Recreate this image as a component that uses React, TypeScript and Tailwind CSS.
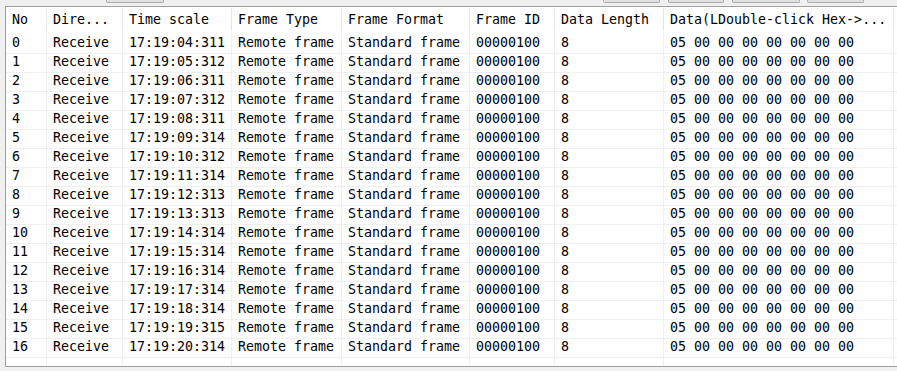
const times = [
  '17:19:04:311',
  '17:19:05:312',
  '17:19:06:311',
  '17:19:07:312',
  '17:19:08:311',
  '17:19:09:314',
  '17:19:10:312',
  '17:19:11:314',
  '17:19:12:313',
  '17:19:13:313',
  '17:19:14:314',
  '17:19:15:314',
  '17:19:16:314',
  '17:19:17:314',
  '17:19:18:314',
  '17:19:19:315',
  '17:19:20:314',
];

const headers = [
  'No',
  'Dire...',
  'Time scale',
  'Frame Type',
  'Frame Format',
  'Frame ID',
  'Data Length',
  'Data(LDouble-click Hex->...',
  '',
];

const cols = 'grid grid-cols-[41px_76px_109px_110px_128px_85px_109px_230px_200px]';

export default function App() {
  return (
    <div className="h-[371px] w-[897px] overflow-hidden bg-[#f0f0f0] font-['DejaVu_Sans_Mono',monospace] text-[13.3px] text-black">
      {/* toolbar buttons, only the bottom edge shows */}
      <div className="flex h-[3px]">
        <div className="ml-[106px] w-[58px] rounded-b-[2px] border-x border-b border-[#adadad] bg-[#e1e1e1]" />
        <div className="ml-[439px] w-[57px] rounded-b-[2px] border-x border-b border-[#adadad] bg-[#e1e1e1]" />
        <div className="ml-[8px] w-[56px] rounded-b-[2px] border-x border-b border-[#adadad] bg-[#e1e1e1]" />
        <div className="ml-[8px] w-[68px] rounded-b-[2px] border-x border-b border-[#adadad] bg-[#e1e1e1]" />
        <div className="ml-[7px] w-[57px] rounded-b-[2px] border-x border-b border-[#adadad] bg-[#e1e1e1]" />
      </div>

      {/* table frame */}
      <div className="ml-[5px] mt-[3px] h-[361px] w-[1100px] overflow-hidden border-y border-l border-[#a0a0a0] bg-white">
        <div className={`${cols} h-[24px]`}>
          {headers.map((h, i) => (
            <div key={i} className="flex items-center py-[1px]">
              <div className="flex h-full flex-1 items-center whitespace-nowrap border-r border-[#e5e5e5] pl-[6px] pt-[2px]">
                {h}
              </div>
            </div>
          ))}
        </div>

        {times.map((t, i) => (
          <div key={i} className={`${cols} h-[19px]`}>
            {[
              String(i),
              'Receive',
              t,
              'Remote frame',
              'Standard frame',
              '00000100',
              '8',
              '05 00 00 00 00 00 00 00',
              '',
            ].map((v, j) => (
              <div
                key={j}
                className="flex items-center whitespace-nowrap border-b border-r border-[#f0f0f0] pl-[6px] pt-[2px]"
              >
                {v}
              </div>
            ))}
          </div>
        ))}

        <div className={`${cols} h-[20px]`}>
          {headers.map((_, j) => (
            <div key={j} className="border-r border-[#f0f0f0]" />
          ))}
        </div>
      </div>
    </div>
  );
}
